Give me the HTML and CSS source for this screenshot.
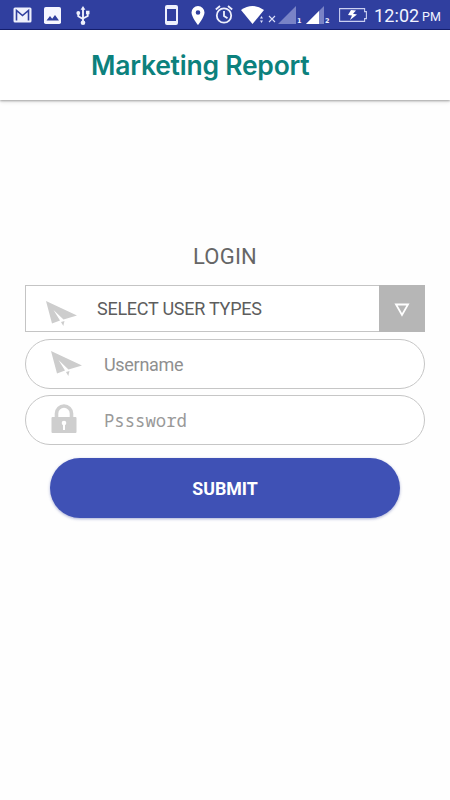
FILE: index.html
```html
<!DOCTYPE html>
<html lang="en">
<head>
<meta charset="utf-8">
<title>Marketing Report</title>
<link rel="stylesheet" href="styles.css">
</head>
<body>
<div class="status">
  <svg class="gmail" width="19" height="16" viewBox="0 0 19 16"><rect x=".5" y=".5" width="18" height="15" rx="1.500" fill="#eef0fc"/><path d="M3.500 13.500V3.500l6 5 6-5v10" fill="none" stroke="#303f9f" stroke-width="1.600"/></svg>
  <svg class="photo" width="17" height="17" viewBox="0 0 17 17"><rect width="17" height="17" rx="1.800" fill="#f5f6ff"/><path d="M2.500 13.500 6 9l2.200 2.700L11 8l4 5.500z" fill="#303f9f"/></svg>
  <svg class="usb" width="14" height="19" viewBox="0 0 14 19"><path d="M7 2v14M2.300 7v3.200L7 13M11.700 7v3L7 12.500" fill="none" stroke="#eef0fc" stroke-width="1.900"/><path d="M7 0 9.400 3.800H4.600zM10 4.800h3.500v3.400H10z" fill="#eef0fc"/><circle cx="2.300" cy="7" r="1.900" fill="#eef0fc"/><circle cx="7" cy="16.700" r="2.300" fill="#eef0fc"/></svg>
  <svg class="phone" width="13" height="20" viewBox="0 0 13 20"><path fill-rule="evenodd" d="M2 0h9a2 2 0 0 1 2 2v16a2 2 0 0 1-2 2H2a2 2 0 0 1-2-2V2a2 2 0 0 1 2-2zm0 4v12h9V4z" fill="#eef0fc"/></svg>
  <svg class="pin" width="14" height="19" viewBox="0 0 14 19"><path fill-rule="evenodd" d="M7 0a6.500 6.500 0 0 1 6.500 6.500C13.500 11 7 19 7 19S.5 11 .5 6.500A6.500 6.500 0 0 1 7 0zm0 4.200a2.300 2.300 0 1 0 0 4.600 2.300 2.300 0 0 0 0-4.600z" fill="#fff"/></svg>
  <svg class="alarm" width="18" height="19" viewBox="0 0 18 19"><g fill="none" stroke="#eef0fc" stroke-width="1.800"><circle cx="9" cy="10.500" r="7.200"/><path d="M9 6v5l3.500 2.200M.8 4.500 5 1M17.200 4.500 13 1"/></g></svg>
  <svg class="wifi" width="23" height="18" viewBox="0 0 23 18"><path d="M0 4Q11.500-4 23 4L11.500 18z" fill="#fff"/></svg>
  <svg class="traffic" width="3" height="7" viewBox="0 0 3 7"><path d="M0 2.500 1.500 0 3 2.500zM0 4.500h3L1.500 7z" fill="#dce0fa"/></svg>
  <svg class="cross" width="8" height="8" viewBox="0 0 8 8"><path d="m1 1 6 6M7 1 1 7" stroke="#dce0fa" stroke-width="1.100"/></svg>
  <svg class="sig1" width="18" height="18" viewBox="0 0 18 18"><path d="M18 0v18H0z" fill="#7983c6"/></svg>
  <span class="sim sim1">1</span>
  <svg class="sig2" width="18" height="18" viewBox="0 0 18 18"><path d="M18 0v18H0z" fill="#7983c6"/><path d="M13 5v13H0z" fill="#fff"/></svg>
  <span class="sim sim2">2</span>
  <svg class="battery" width="28" height="14" viewBox="0 0 28 14"><path d="M.6.6h25v3h1.800v7h-1.800v2.800H.6z" fill="none" stroke="#cbd0f1" stroke-width="1.100"/><path d="m12 2-3 5 4 .5-2 4.500 7-5.500-4-.8 3-3.200z" fill="#fff"/></svg>
  <span class="clock">12:02</span><span class="pm">PM</span>
</div>
<header class="bar"><h1>Marketing Report</h1></header>
<main>
  <h2>LOGIN</h2>
  <div class="select">
    <svg class="plane plane-low" width="32" height="26" viewBox="0 0 32 26"><path d="M0 0 31 14.500 17.500 18.500 7.500 9l6.500 10.500L6 22.500z" fill="#cdcdcd"/><path d="m15 21 3.500-1-1.200 5z" fill="#cdcdcd"/></svg>
    <span class="choice">SELECT USER TYPES</span>
    <span class="arrow"><svg width="16" height="14" viewBox="0 0 16 14"><path d="M2 1.500h12L8 12z" fill="none" stroke="#fff" stroke-width="1.800"/></svg></span>
  </div>
  <div class="field">
    <svg class="plane" width="32" height="26" viewBox="0 0 32 26"><path d="M0 0 31 14.500 17.500 18.500 7.500 9l6.500 10.500L6 22.500z" fill="#cdcdcd"/><path d="m15 21 3.500-1-1.200 5z" fill="#cdcdcd"/></svg>
    <span class="user">Username</span>
  </div>
  <div class="field password">
    <svg class="lock" width="26" height="29" viewBox="0 0 26 29"><path d="M5.500 14V9.500a7.500 7.500 0 0 1 15 0V14" fill="none" stroke="#d0d0d0" stroke-width="3.600"/><rect x=".5" y="13" width="25" height="16" rx="1" fill="#cecece"/><circle cx="13" cy="19" r="2.300" fill="#fff"/><path d="M12 19h2v7h-2z" fill="#fff"/></svg>
    <span class="pass">Psssword</span>
  </div>
  <div class="submit"><span>SUBMIT</span></div>
</main>
</body>
</html>
```
FILE: styles.css
```css
* { box-sizing: border-box; }
body { margin: 0; width: 450px; height: 800px; overflow: hidden; background: #fefefe; font-family: Roboto, sans-serif; }
svg { display: block; flex: none; }
.status { display: flex; align-items: flex-start; height: 30px; background: #303f9f; border-bottom: 1px solid #172071; color: #f2f4ff; white-space: nowrap; }
.gmail { margin: 7px 0 0 13px; }
.photo { margin: 7px 0 0 12px; }
.usb { margin: 6px 0 0 15px; }
.phone { margin: 5px 0 0 75px; }
.pin { margin: 6px 0 0 13px; }
.alarm { margin: 5px 0 0 10px; }
.wifi { margin: 6px 0 0 8px; }
.traffic { margin: 16px 0 0 -4px; }
.cross { margin: 15px 0 0 5px; }
.sig1 { margin: 6px 0 0 2px; }
.sim { width: 5px; margin-top: 17px; font: bold 6.500px/9px "DejaVu Sans", sans-serif; }
.sim1 { margin-left: 1px; }
.sig2 { margin: 6px 0 0 4px; }
.sim2 { margin-left: 1px; }
.battery { margin: 8px 0 0 9px; }
.clock { margin-left: 7px; width: 45px; font-size: 18px; line-height: 31px; letter-spacing: .1px; }
.pm { margin-left: 3px; font-size: 12.500px; line-height: 34px; }
.bar { height: 70px; padding: 17px 0 0 91px; background: #fff; box-shadow: 0 1px 2px rgba(0, 0, 0, .3), 0 2px 4px rgba(0, 0, 0, .1); }
h1 { margin: 0; font: 600 26.500px/37px Inter, sans-serif; letter-spacing: -.23px; color: #0c817d; white-space: nowrap; }
main { padding: 140px 25px 0; }
h2 { margin: 0; height: 45px; font-size: 22px; line-height: 34px; font-weight: 400; letter-spacing: .2px; color: #666; text-align: center; }
.select { display: flex; height: 47px; border: 1px solid #c4c4c4; background: #fff; }
.plane { margin: 11px 0 0 25px; }
.plane-low { margin: 15px 0 0 20px; }
.choice { margin-left: 19px; font-size: 18px; line-height: 45px; letter-spacing: -.25px; color: #5d5d5d; white-space: nowrap; }
.arrow { display: flex; align-items: center; justify-content: center; width: 46px; height: 47px; margin: -1px -1px 0 auto; padding-top: 3px; background: #b6b6b6; }
.field { display: flex; height: 50px; margin-top: 7px; border: 1px solid #c6c6c6; border-radius: 25px; background: #fff; color: #8f8f8f; }
.password { margin-top: 6px; }
.user { margin-left: 21px; font-size: 18px; line-height: 50px; letter-spacing: -.3px; }
.lock { margin: 8px 0 0 25px; }
.pass { margin-left: 27px; font: 17.300px/50px "Noto Sans Mono", "DejaVu Sans Mono", monospace; color: #999; }
.submit { height: 60px; margin: 13px 25px 0; border-radius: 30px; background: #3f51b5; box-shadow: 0 1px 3px rgba(40, 55, 150, .4); color: #fff; font-size: 17.800px; line-height: 62px; font-weight: 700; text-align: center; }
```
